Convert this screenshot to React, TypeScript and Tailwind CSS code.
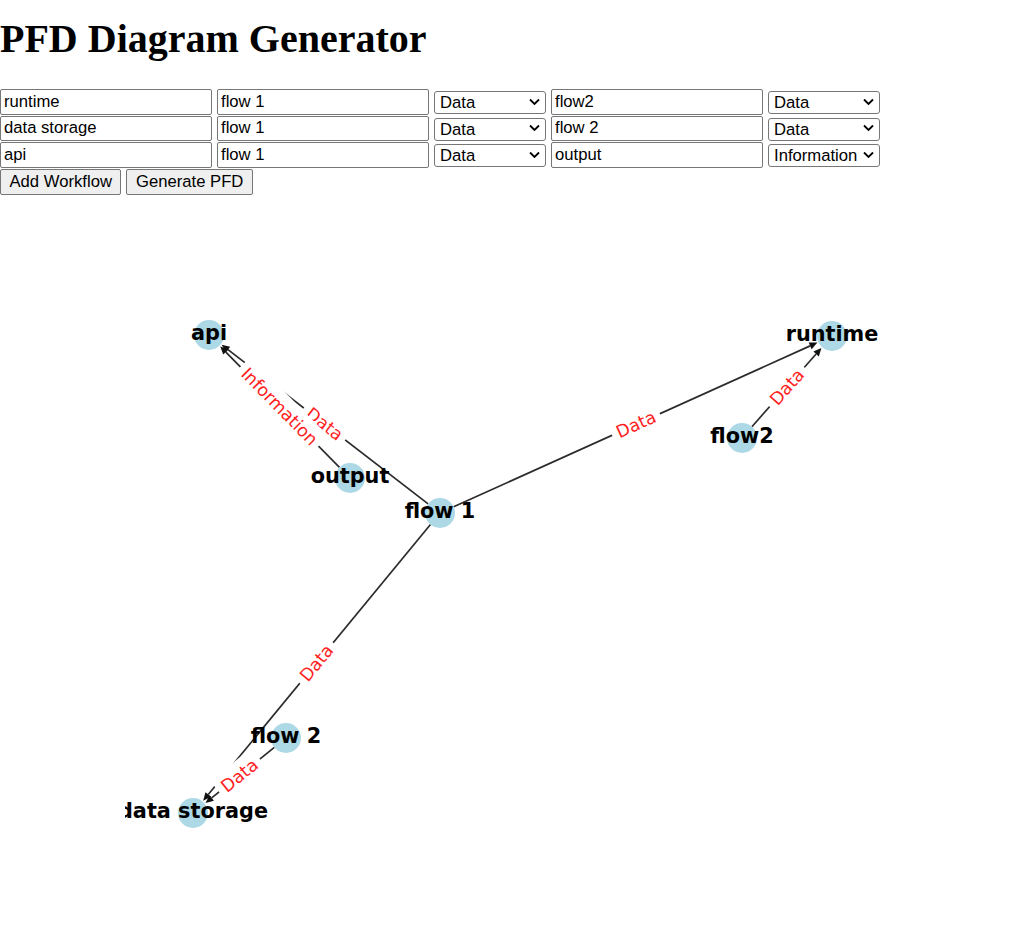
import { useState } from "react";

interface Workflow {
	source: string,
	flow: string,
	flowType: string,
	target: string,
	targetType: string,
}

interface Point {
	x: number,
	y: number,
}

// node centres, in page pixels (the svg viewBox starts at y=196)
const nodes: Record<string, Point> = {
	"runtime": { x: 832, y: 335 },
	"flow 1": { x: 440, y: 512 },
	"flow2": { x: 742, y: 437 },
	"data storage": { x: 193, y: 812 },
	"flow 2": { x: 286, y: 737 },
	"api": { x: 209, y: 334 },
	"output": { x: 350, y: 477 },
};

const edges: [string, string, string][] = [
	["flow 1", "runtime", "Data"],
	["flow2", "runtime", "Data"],
	["flow 1", "data storage", "Data"],
	["flow 2", "data storage", "Data"],
	["flow 1", "api", "Data"],
	["output", "api", "Information"],
];

const labelWidth: Record<string, number> = {
	"Data": 42,
	"Information": 101,
};

const types = ["Data", "Information", "Material"];

const Chevron = () => (
	<svg className="absolute right-[6px] top-1/2 -translate-y-1/2 pointer-events-none" width="11" height="7" viewBox="0 0 11 7">
		<path d="M1 1 L5.5 5.5 L10 1" fill="none" stroke="#000" strokeWidth="1.8" />
	</svg>
);

const TypeSelect = ({ value, onChange }: { value: string, onChange: (v: string) => void }) => (
	<div className="relative w-[112px] h-[23px]">
		<select
			value={value}
			onChange={(e) => onChange(e.target.value)}
			className="appearance-none w-full h-full border border-[#767676] rounded-[3px] bg-white pl-[5px] pr-[18px] py-0 leading-[17px] outline-none"
		>
			{types.map((t) => <option key={t} value={t}>{t}</option>)}
		</select>
		<Chevron />
	</div>
);

const TextBox = ({ value, onChange }: { value: string, onChange: (v: string) => void }) => (
	<input
		type="text"
		value={value}
		onChange={(e) => onChange(e.target.value)}
		className="w-[212px] h-[25.5px] border border-[#767676] rounded-[2px] bg-white pl-[3px] outline-none"
	/>
);

const Diagram = () => {
	const lines = edges.map(([s, t, label], i) => {
		const a = nodes[s];
		const b = nodes[t];
		const dx = b.x - a.x;
		const dy = b.y - a.y;
		const len = Math.hypot(dx, dy);
		const ux = dx / len;
		const uy = dy / len;
		const start = { x: a.x + ux * 15, y: a.y + uy * 15 };
		const tip = { x: b.x - ux * 16, y: b.y - uy * 16 };
		const base = { x: tip.x - ux * 8, y: tip.y - uy * 8 };
		const px = -uy * 3.6;
		const py = ux * 3.6;
		let angle = Math.atan2(dy, dx) * 180 / Math.PI;
		if (angle > 90) angle -= 180;
		if (angle < -90) angle += 180;
		return { i, label, start, tip, base, px, py, angle, mid: { x: (a.x + b.x) / 2, y: (a.y + b.y) / 2 } };
	});

	return (
		<svg className="block mt-[2px]" width="1000" height="750" viewBox="0 196 1000 750">
			<defs>
				<clipPath id="axes">
					<rect x="125" y="286" width="775" height="577" />
				</clipPath>
			</defs>
			{lines.map((l) => (
				<g key={"e" + l.i}>
					<line x1={l.start.x} y1={l.start.y} x2={l.base.x} y2={l.base.y} stroke="#2b2b2b" strokeWidth="1.7" />
					<polygon
						points={`${l.tip.x},${l.tip.y} ${l.base.x + l.px},${l.base.y + l.py} ${l.base.x - l.px},${l.base.y - l.py}`}
						fill="#111"
					/>
				</g>
			))}
			{Object.entries(nodes).map(([name, p]) => (
				<circle key={"n" + name} cx={p.x} cy={p.y} r="15" fill="#add8e6" />
			))}
			<g clipPath="url(#axes)">
				{Object.entries(nodes).map(([name, p]) => (
					<text
						key={"t" + name}
						x={p.x}
						y={p.y + 5}
						textAnchor="middle"
						fontFamily="'DejaVu Sans', sans-serif"
						fontWeight="bold"
						fontSize="20.8"
						fill="#000"
					>
						{name}
					</text>
				))}
			</g>
			{lines.map((l) => {
				const w = labelWidth[l.label] + 10.4;
				return (
					<g key={"l" + l.i} transform={`translate(${l.mid.x} ${l.mid.y}) rotate(${l.angle})`}>
						<rect x={-w / 2} y={-14} width={w} height={28} rx="5" fill="#fff" />
						<text
							x="0"
							y="6"
							textAnchor="middle"
							fontFamily="'DejaVu Sans', sans-serif"
							fontSize="17.4"
							fill="#ff1f1f"
						>
							{l.label}
						</text>
					</g>
				);
			})}
		</svg>
	);
};

const App = () => {
	const [workflows, setWorkflows] = useState<Workflow[]>([
		{ source: "runtime", flow: "flow 1", flowType: "Data", target: "flow2", targetType: "Data" },
		{ source: "data storage", flow: "flow 1", flowType: "Data", target: "flow 2", targetType: "Data" },
		{ source: "api", flow: "flow 1", flowType: "Data", target: "output", targetType: "Information" },
	]);

	const update = (index: number, key: keyof Workflow, value: string) => {
		setWorkflows(workflows.map((w, i) => (i === index ? { ...w, [key]: value } : w)));
	};

	const addWorkflow = () => {
		setWorkflows([...workflows, { source: "", flow: "", flowType: "Data", target: "", targetType: "Data" }]);
	};

	return (
		<div className="min-h-screen bg-white text-black font-['Liberation_Sans',Arial,sans-serif] text-[16.67px] leading-normal">
			<h1 className="pt-[17px] mb-[28px] font-['Liberation_Serif','Times_New_Roman',serif] text-[40px] leading-[44px] font-bold">
				PFD Diagram Generator
			</h1>
			<div className="flex flex-col gap-[1px]">
				{workflows.map((w, index) => (
					<div key={index} className="flex items-center gap-[5px] h-[25.5px]">
						<TextBox value={w.source} onChange={(v) => update(index, "source", v)} />
						<TextBox value={w.flow} onChange={(v) => update(index, "flow", v)} />
						<TypeSelect value={w.flowType} onChange={(v) => update(index, "flowType", v)} />
						<TextBox value={w.target} onChange={(v) => update(index, "target", v)} />
						<TypeSelect value={w.targetType} onChange={(v) => update(index, "targetType", v)} />
					</div>
				))}
				<div className="flex gap-[5px] h-[26px]">
					<button onClick={addWorkflow} className="h-full px-[8.5px] border border-[#767676] rounded-[2px] bg-[#efefef] leading-[20px]">
						Add Workflow
					</button>
					<button className="h-full px-[8.5px] border border-[#767676] rounded-[2px] bg-[#efefef] leading-[20px]">
						Generate PFD
					</button>
				</div>
			</div>
			<Diagram />
		</div>
	);
}

export default App;
